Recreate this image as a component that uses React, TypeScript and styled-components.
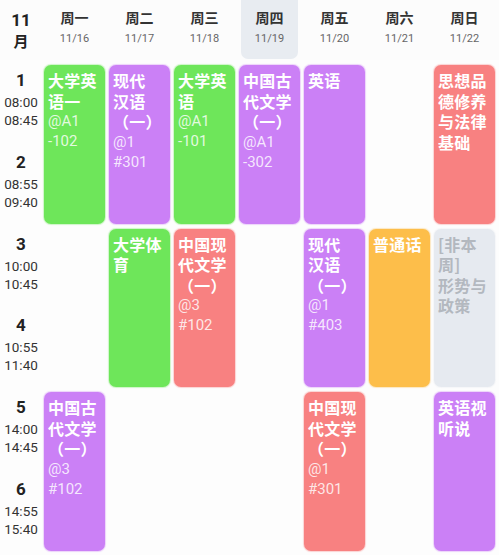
import React from "react";
import styled, { createGlobalStyle } from "styled-components";

const Global = createGlobalStyle`
  html, body { margin: 0; padding: 0; background: #fdfdfd; }
  body { font-family: Roboto, "Noto Sans CJK SC", sans-serif; width: 499px; height: 555px; overflow: hidden; }
`;

const Page = styled.div`
  width: 499px;
  height: 555px;
  background: #fdfdfd;
`;

const Header = styled.div`
  display: grid;
  grid-template-columns: 42px repeat(7, 65px);
  height: 60px;
  background: #fcfcfc;
`;

const MonthCell = styled.div`
  display: flex;
  flex-direction: column;
  align-items: center;
  padding-top: 9px;
  color: #222;
  font-weight: 700;
  font-family: Roboto, "Noto Sans CJK SC", sans-serif;
`;

const MonthNum = styled.div`
  font-size: 17px;
  line-height: 22px;
`;

const MonthUnit = styled.div`
  font-size: 15px;
  line-height: 20px;
  font-family: "Noto Sans CJK SC", sans-serif;
`;

const DayCell = styled.div<{ $today?: boolean }>`
  display: flex;
  flex-direction: column;
  align-items: center;
  margin: 0 ${(p) => (p.$today ? "4px" : "0")} 1px;
  padding-top: 6px;
  border-radius: 0 0 7px 7px;
  background: ${(p) => (p.$today ? "#e8ecf1" : "transparent")};
`;

const DayName = styled.div`
  font-family: "Noto Sans CJK SC", sans-serif;
  font-weight: 700;
  font-size: 14px;
  line-height: 22px;
  color: #333;
`;

const DayDate = styled.div`
  font-family: Roboto, sans-serif;
  font-size: 11px;
  line-height: 22px;
  color: #666;
`;

const Body = styled.div`
  display: grid;
  grid-template-columns: 42px repeat(7, 65px);
  grid-template-rows: repeat(6, 81.75px);
  margin-top: 3px;
`;

const TimeCell = styled.div<{ $row: number }>`
  grid-column: 1;
  grid-row: ${(p) => p.$row};
  display: flex;
  flex-direction: column;
  align-items: center;
  padding-top: 7px;
  font-family: Roboto, sans-serif;
`;

const PeriodNum = styled.div`
  font-size: 17px;
  font-weight: 700;
  line-height: 20px;
  color: #222;
  margin-bottom: 3px;
`;

const TimeText = styled.div`
  font-size: 13.5px;
  line-height: 18px;
  color: #333;
`;

const palette: Record<string, { bg: string; fg: string; sub: string }> = {
  green: { bg: "#6ee65a", fg: "#ffffff", sub: "rgba(255,255,255,0.82)" },
  purple: { bg: "#cb80f6", fg: "#ffffff", sub: "rgba(255,255,255,0.82)" },
  red: { bg: "#f88181", fg: "#ffffff", sub: "rgba(255,255,255,0.82)" },
  orange: { bg: "#fdbe4a", fg: "#ffffff", sub: "rgba(255,255,255,0.82)" },
  gray: { bg: "#e6eaf0", fg: "#b3b8bf", sub: "#b3b8bf" },
};

const Card = styled.div<{ $col: number; $row: number; $color: string }>`
  grid-column: ${(p) => p.$col + 1};
  grid-row: ${(p) => p.$row} / span 2;
  margin: 2px 2px 3px 2px;
  border-radius: 7px;
  background: ${(p) => palette[p.$color].bg};
  box-shadow: 0 0 1px 1px ${(p) => palette[p.$color].bg}55;
  padding: 5px 4px;
  overflow: hidden;
`;

const Title = styled.div<{ $color: string }>`
  font-family: "Noto Sans CJK SC", sans-serif;
  font-weight: 700;
  font-size: 16px;
  line-height: 20.5px;
  color: ${(p) => palette[p.$color].fg};
  white-space: nowrap;
  letter-spacing: 0.2px;
`;

const Place = styled.div<{ $color: string }>`
  font-family: Roboto, "Noto Sans CJK SC", sans-serif;
  font-size: 15px;
  line-height: 20px;
  color: ${(p) => palette[p.$color].sub};
  white-space: nowrap;
`;

type Course = { col: number; row: number; color: string; title: string[]; place?: string[] };

const courses: Course[] = [
  { col: 1, row: 1, color: "green", title: ["大学英", "语一"], place: ["@A1", "-102"] },
  { col: 1, row: 5, color: "purple", title: ["中国古", "代文学", "（一）"], place: ["@3", "#102"] },
  { col: 2, row: 1, color: "purple", title: ["现代", "汉语", "（一）"], place: ["@1", "#301"] },
  { col: 2, row: 3, color: "green", title: ["大学体", "育"] },
  { col: 3, row: 1, color: "green", title: ["大学英", "语"], place: ["@A1", "-101"] },
  { col: 3, row: 3, color: "red", title: ["中国现", "代文学", "（一）"], place: ["@3", "#102"] },
  { col: 4, row: 1, color: "purple", title: ["中国古", "代文学", "（一）"], place: ["@A1", "-302"] },
  { col: 5, row: 1, color: "purple", title: ["英语"] },
  { col: 5, row: 3, color: "purple", title: ["现代", "汉语", "（一）"], place: ["@1", "#403"] },
  { col: 5, row: 5, color: "red", title: ["中国现", "代文学", "（一）"], place: ["@1", "#301"] },
  { col: 6, row: 3, color: "orange", title: ["普通话"] },
  { col: 7, row: 1, color: "red", title: ["思想品", "德修养", "与法律", "基础"] },
  { col: 7, row: 3, color: "gray", title: ["[非本", "周]", "形势与", "政策"] },
  { col: 7, row: 5, color: "purple", title: ["英语视", "听说"] },
];

const days = [
  ["周一", "11/16"],
  ["周二", "11/17"],
  ["周三", "11/18"],
  ["周四", "11/19"],
  ["周五", "11/20"],
  ["周六", "11/21"],
  ["周日", "11/22"],
];

const periods = [
  ["1", "08:00", "08:45"],
  ["2", "08:55", "09:40"],
  ["3", "10:00", "10:45"],
  ["4", "10:55", "11:40"],
  ["5", "14:00", "14:45"],
  ["6", "14:55", "15:40"],
];

export default function App() {
  return (
    <Page>
      <Global />
      <Header>
        <MonthCell>
          <MonthNum>11</MonthNum>
          <MonthUnit>月</MonthUnit>
        </MonthCell>
        {days.map(([n, d], i) => (
          <DayCell key={n} $today={i === 3}>
            <DayName>{n}</DayName>
            <DayDate>{d}</DayDate>
          </DayCell>
        ))}
      </Header>
      <Body>
        {periods.map(([n, a, b], i) => (
          <TimeCell key={n} $row={i + 1}>
            <PeriodNum>{n}</PeriodNum>
            <TimeText>{a}</TimeText>
            <TimeText>{b}</TimeText>
          </TimeCell>
        ))}
        {courses.map((c, i) => (
          <Card key={i} $col={c.col} $row={c.row} $color={c.color}>
            {c.title.map((t, j) => (
              <Title key={j} $color={c.color}>{t}</Title>
            ))}
            {c.place?.map((t, j) => (
              <Place key={j} $color={c.color}>{t}</Place>
            ))}
          </Card>
        ))}
      </Body>
    </Page>
  );
}
